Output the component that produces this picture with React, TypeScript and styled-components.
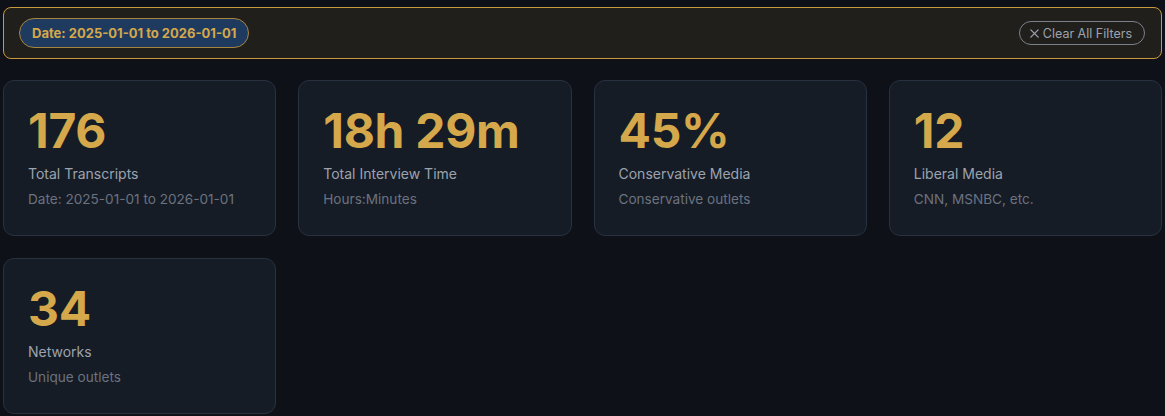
import React from "react";
import styled, { createGlobalStyle } from "styled-components";

const GlobalStyle = createGlobalStyle`
  html, body {
    margin: 0;
    background: #0e1118;
  }
  body {
    font-family: Inter, "Noto Sans", "Liberation Sans", sans-serif;
    -webkit-font-smoothing: antialiased;
  }
`;

const Page = styled.div`
  padding: 7px 3px;
  display: flex;
  flex-direction: column;
  gap: 21px;
`;

const FilterBar = styled.div`
  display: flex;
  align-items: center;
  justify-content: space-between;
  padding: 10px 16px 10px 15px;
  background: #211f1b;
  border: 1px solid #c99a3c;
  border-radius: 8px;
`;

const Chip = styled.span`
  display: inline-flex;
  align-items: center;
  height: 30px;
  box-sizing: border-box;
  padding: 0 12px;
  background: #1f3a5f;
  border: 1px solid #a8853f;
  border-radius: 9999px;
  color: #d4a84b;
  font-size: 13px;
  font-weight: 700;
`;

const ClearButton = styled.button`
  display: inline-flex;
  align-items: center;
  gap: 3px;
  height: 24px;
  box-sizing: border-box;
  padding: 0 12px 0 9px;
  background: transparent;
  border: 1px solid #7b818b;
  border-radius: 9999px;
  color: #9ca3af;
  font-family: inherit;
  font-size: 12.5px;
  cursor: pointer;
`;

const Grid = styled.div`
  display: grid;
  grid-template-columns: repeat(4, 1fr);
  gap: 22px;
`;

const Card = styled.div`
  background: #161c25;
  border: 1px solid #273140;
  border-radius: 11px;
  padding: 26px 24px 26px;
`;

const Value = styled.div`
  color: #d4a84b;
  font-size: 48px;
  font-weight: 700;
  line-height: 1;
  letter-spacing: -0.3px;
`;

const Label = styled.div`
  margin-top: 9px;
  color: #9ca3af;
  font-size: 14px;
  line-height: 20px;
`;

const Sub = styled.div`
  margin-top: 5px;
  color: #6b7280;
  font-size: 13.6px;
  line-height: 20px;
`;

const stats = [
  { value: "176", label: "Total Transcripts", sub: "Date: 2025-01-01 to 2026-01-01" },
  { value: "18h 29m", label: "Total Interview Time", sub: "Hours:Minutes" },
  { value: "45%", label: "Conservative Media", sub: "Conservative outlets" },
  { value: "12", label: "Liberal Media", sub: "CNN, MSNBC, etc." },
  { value: "34", label: "Networks", sub: "Unique outlets" },
];

export default function App() {
  return (
    <>
      <GlobalStyle />
      <Page>
        <FilterBar>
          <Chip>Date: 2025-01-01 to 2026-01-01</Chip>
          <ClearButton>
            <svg width="11" height="11" viewBox="0 0 12 12" fill="none" stroke="currentColor" strokeWidth="1.4" strokeLinecap="round">
              <path d="M2 2l8 8M10 2l-8 8" />
            </svg>
            Clear All Filters
          </ClearButton>
        </FilterBar>
        <Grid>
          {stats.map((s) => (
            <Card key={s.label}>
              <Value>{s.value}</Value>
              <Label>{s.label}</Label>
              <Sub>{s.sub}</Sub>
            </Card>
          ))}
        </Grid>
      </Page>
    </>
  );
}
